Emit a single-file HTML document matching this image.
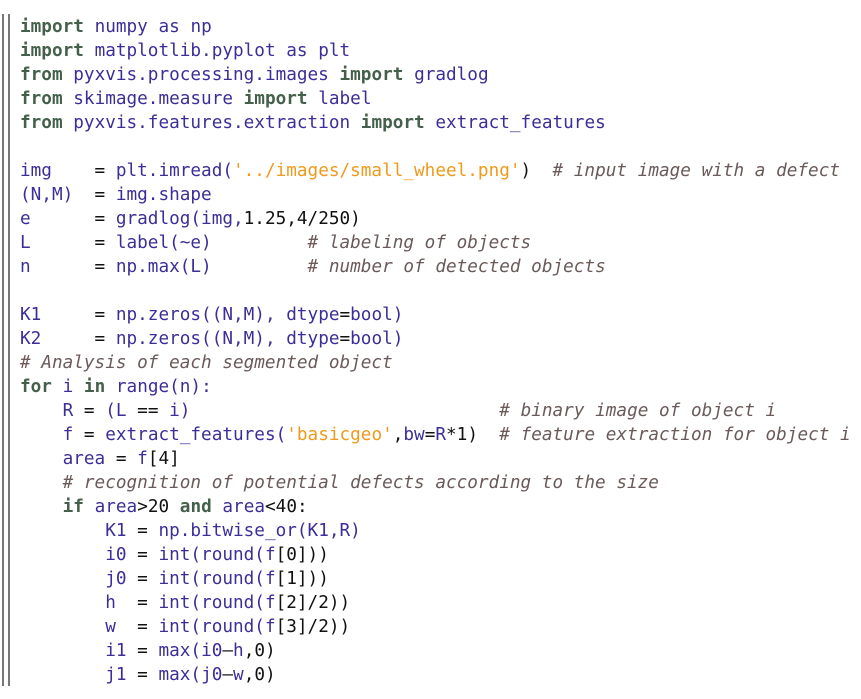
<!DOCTYPE html><html><head><style>
body{margin:0;background:#fff;width:861px;height:699px;overflow:hidden;position:relative}
.b1{position:absolute;left:2px;top:14px;width:2px;height:672px;background:#777}
.b2{position:absolute;left:8px;top:14px;width:2px;height:672px;background:#777}
pre{position:absolute;left:20px;top:15px;margin:0;font-family:"DejaVu Sans Mono","Liberation Mono",monospace;font-size:17.7px;line-height:24px;color:#111}
.k{color:#44604a;font-weight:bold}
.n{color:#3b2e98}
.s{color:#f09a1c}
.c{color:#6b5a5a;font-style:italic}
</style></head><body><div class="b1"></div><div class="b2"></div>
<pre><span class="k">import</span> <span class="n">numpy</span> <span class="n">as</span> <span class="n">np</span>
<span class="k">import</span> <span class="n">matplotlib.pyplot</span> <span class="n">as</span> <span class="n">plt</span>
<span class="k">from</span> <span class="n">pyxvis.processing.images</span> <span class="k">import</span> <span class="n">gradlog</span>
<span class="k">from</span> <span class="n">skimage.measure</span> <span class="k">import</span> <span class="n">label</span>
<span class="k">from</span> <span class="n">pyxvis.features.extraction</span> <span class="k">import</span> <span class="n">extract_features</span>

<span class="n">img</span>    = <span class="n">plt.imread(</span><span class="s">'../images/small_wheel.png'</span>)  <span class="c"># input image with a defect</span>
<span class="n">(N,M)</span>  = <span class="n">img.shape</span>
<span class="n">e</span>      = <span class="n">gradlog(img,</span>1.25,4/250)
<span class="n">L</span>      = <span class="n">label(~e)</span>         <span class="c"># labeling of objects</span>
<span class="n">n</span>      = <span class="n">np.max(L)</span>         <span class="c"># number of detected objects</span>

<span class="n">K1</span>     = <span class="n">np.zeros((N,M),</span> <span class="n">dtype</span>=<span class="n">bool)</span>
<span class="n">K2</span>     = <span class="n">np.zeros((N,M),</span> <span class="n">dtype</span>=<span class="n">bool)</span>
<span class="c"># Analysis of each segmented object</span>
<span class="k">for</span> <span class="n">i</span> <span class="k">in</span> <span class="n">range(n):</span>
    <span class="n">R</span> = <span class="n">(L</span> == <span class="n">i)</span>                             <span class="c"># binary image of object i</span>
    <span class="n">f</span> = <span class="n">extract_features(</span><span class="s">'basicgeo'</span>,<span class="n">bw</span>=<span class="n">R</span>*1)  <span class="c"># feature extraction for object i</span>
    <span class="n">area</span> = <span class="n">f</span>[4]
    <span class="c"># recognition of potential defects according to the size</span>
    <span class="k">if</span> <span class="n">area</span>&gt;20 <span class="k">and</span> <span class="n">area</span>&lt;40:
        <span class="n">K1</span> = <span class="n">np.bitwise_or(K1,R)</span>
        <span class="n">i0</span> = <span class="n">int(round(f</span>[0]))
        <span class="n">j0</span> = <span class="n">int(round(f</span>[1]))
        <span class="n">h</span>  = <span class="n">int(round(f</span>[2]/2))
        <span class="n">w</span>  = <span class="n">int(round(f</span>[3]/2))
        <span class="n">i1</span> = <span class="n">max(i0</span>&#8212;<span class="n">h</span>,0)
        <span class="n">j1</span> = <span class="n">max(j0</span>&#8212;<span class="n">w</span>,0)</pre>
</body></html>
